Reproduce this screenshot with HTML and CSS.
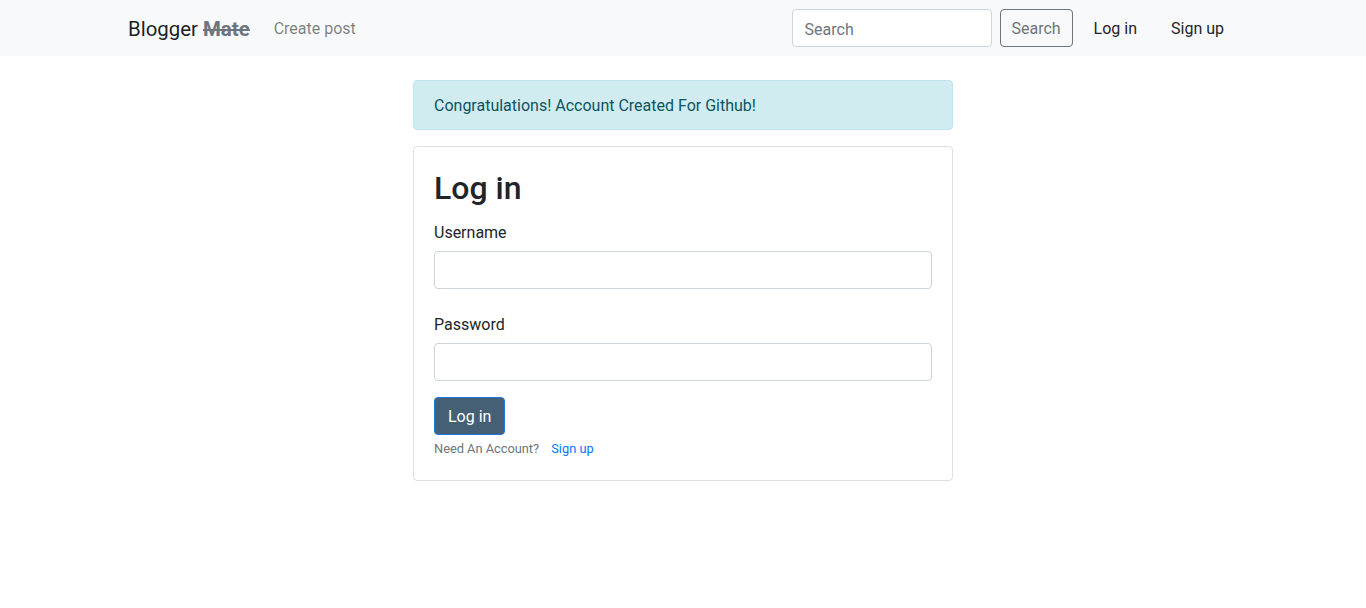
FILE: index.html
```html
<!DOCTYPE html>
<html lang="en">
<head>
<meta charset="utf-8">
<title>Blogger Mate - Log in</title>
<link rel="stylesheet" href="styles.css">
</head>
<body>
<header class="navbar">
  <div class="container nav-inner">
    <a class="brand" href="#">Blogger <del class="brand-strike">Mate</del></a>
    <nav class="nav-left">
      <a class="nav-link muted" href="#">Create post</a>
    </nav>
    <div class="nav-right">
      <form class="search-form">
        <input class="search-input" type="text" placeholder="Search">
        <button class="btn-outline" type="button">Search</button>
      </form>
      <a class="nav-link dark" href="#">Log in</a>
      <a class="nav-link dark" href="#">Sign up</a>
    </div>
  </div>
</header>
<main class="container main">
  <div class="column">
    <div class="alert">Congratulations! Account Created For Github!</div>
    <section class="card">
      <h1 class="title">Log in</h1>
      <div class="form-group">
        <label class="label">Username</label>
        <input class="field" type="text">
      </div>
      <div class="form-group">
        <label class="label">Password</label>
        <input class="field" type="password">
      </div>
      <button class="btn-primary" type="button">Log in</button>
      <p class="small-note">Need An Account? <a class="link" href="#">Sign up</a></p>
    </section>
  </div>
</main>
</body>
</html>
```

FILE: styles.css
```css
* { box-sizing: border-box; }
html, body { margin: 0; padding: 0; }
body {
  font-family: Roboto, "Liberation Sans", sans-serif;
  font-size: 16px;
  line-height: 1.5;
  color: #212529;
  background: #fff;
}
a { text-decoration: none; }
.container {
  width: 1140px;
  margin: 0 auto;
  padding: 0 15px;
}
.navbar {
  background: #f8f9fa;
  height: 56px;
}
.nav-inner {
  display: flex;
  align-items: center;
  height: 56px;
  padding-right: 21px;
  padding-top: 2px;
}
.brand {
  font-size: 20.4px;
  color: rgba(0,0,0,.9);
  margin-right: 16px;
  line-height: 30px;
}
.brand-strike {
  font-weight: 700;
  color: #6c757d;
  text-decoration: line-through;
}
.nav-left { display: flex; flex: 1; }
.nav-link {
  padding: 8px;
  font-size: 16px;
}
.nav-link.muted { color: rgba(0,0,0,.5); }
.nav-link.dark { color: #212529; }
.nav-right {
  display: flex;
  align-items: center;
}
.search-form {
  display: flex;
  gap: 8px;
  margin-right: 13px;
  margin-top: -2px;
}
.search-input {
  width: 200px;
  height: 38px;
  border: 1px solid #ced4da;
  border-radius: 4px;
  padding: 7px 12px 5px;
  font: inherit;
  color: #495057;
  background: #fff;
}
.search-input::placeholder { color: #6c757d; }
.btn-outline {
  width: 73px;
  height: 38px;
  border: 1px solid #6c757d;
  border-radius: 4px;
  background: transparent;
  color: #6c757d;
  font: inherit;
  padding: 2px 0 0;
}
.nav-right .nav-link + .nav-link { margin-left: 18px; }
.main { margin-top: 24px; }
.column {
  width: 540px;
  margin: 0 auto;
}
.alert {
  background: #d1ecf1;
  border: 1px solid #bee5eb;
  color: #0c5460;
  border-radius: 4px;
  padding: 13px 20px 11px;
  margin-bottom: 16px;
}
.card {
  border: 1px solid rgba(0,0,0,.125);
  border-radius: 4px;
  padding: 20px 20px 22px;
}
.title {
  font-size: 32px;
  font-weight: 500;
  line-height: 1.2;
  margin: 2px 0 12px;
}
.form-group { margin-bottom: 22px; }
.form-group:last-of-type { margin-bottom: 16px; }
.label {
  display: block;
  padding-top: 2px;
  margin-bottom: 6px;
}
.field {
  display: block;
  width: 100%;
  height: 38px;
  border: 1px solid #ced4da;
  border-radius: 4px;
  padding: 6px 12px;
  font: inherit;
}
.btn-primary {
  height: 38px;
  padding: 2px 13px 0;
  background: #455f75;
  color: #fff;
  border: 1px solid #1f7ae0;
  border-radius: 4px;
  font: inherit;
}
.small-note {
  margin: 4px 0 0;
  font-size: 12.8px;
  line-height: 19px;
  color: #6c757d;
}
.link { color: #007bff; margin-left: 9px; }
```
